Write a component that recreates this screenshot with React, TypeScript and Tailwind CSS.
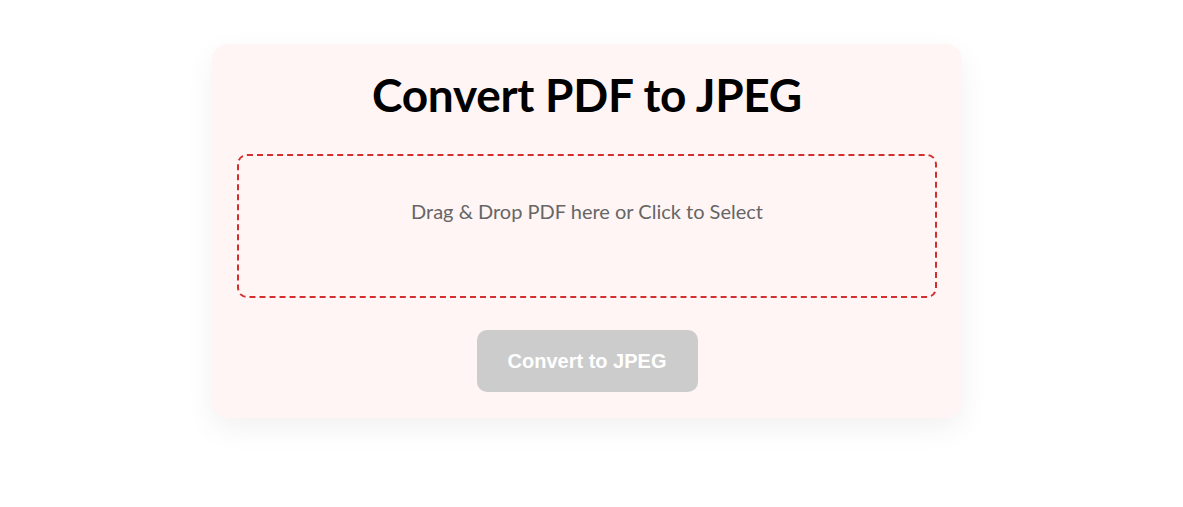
export default function App() {
  return (
    <div className="min-h-screen bg-white flex justify-center pt-[44px] pr-[9px]" style={{ fontFamily: 'Lato, "Noto Sans", sans-serif' }}>
      <div className="w-[750px] h-[374px] bg-[#fff5f5] rounded-[16px] shadow-[0_10px_30px_rgba(0,0,0,0.06)] px-[25px] pt-[24px] flex flex-col items-center">
        {/* Title */}
        <h1 className="text-[46px] leading-[54px] font-bold text-black tracking-[-0.3px]">Convert PDF to JPEG</h1>

        {/* Drop zone */}
        <div className="mt-[32px] w-full h-[144px] border-2 border-dashed border-[#d32f2f] rounded-[10px] flex justify-center pt-[42px] cursor-pointer">
          <p className="text-[20px] leading-[26px] text-[#666]">Drag &amp; Drop PDF here or Click to Select</p>
        </div>

        {/* Action */}
        <button
          disabled
          className="mt-[32px] w-[221px] h-[62px] rounded-[10px] bg-[#ccc] text-white text-[20px] font-bold"
          style={{ fontFamily: '"Liberation Sans", Arial, sans-serif' }}
        >
          Convert to JPEG
        </button>
      </div>
    </div>
  );
}
